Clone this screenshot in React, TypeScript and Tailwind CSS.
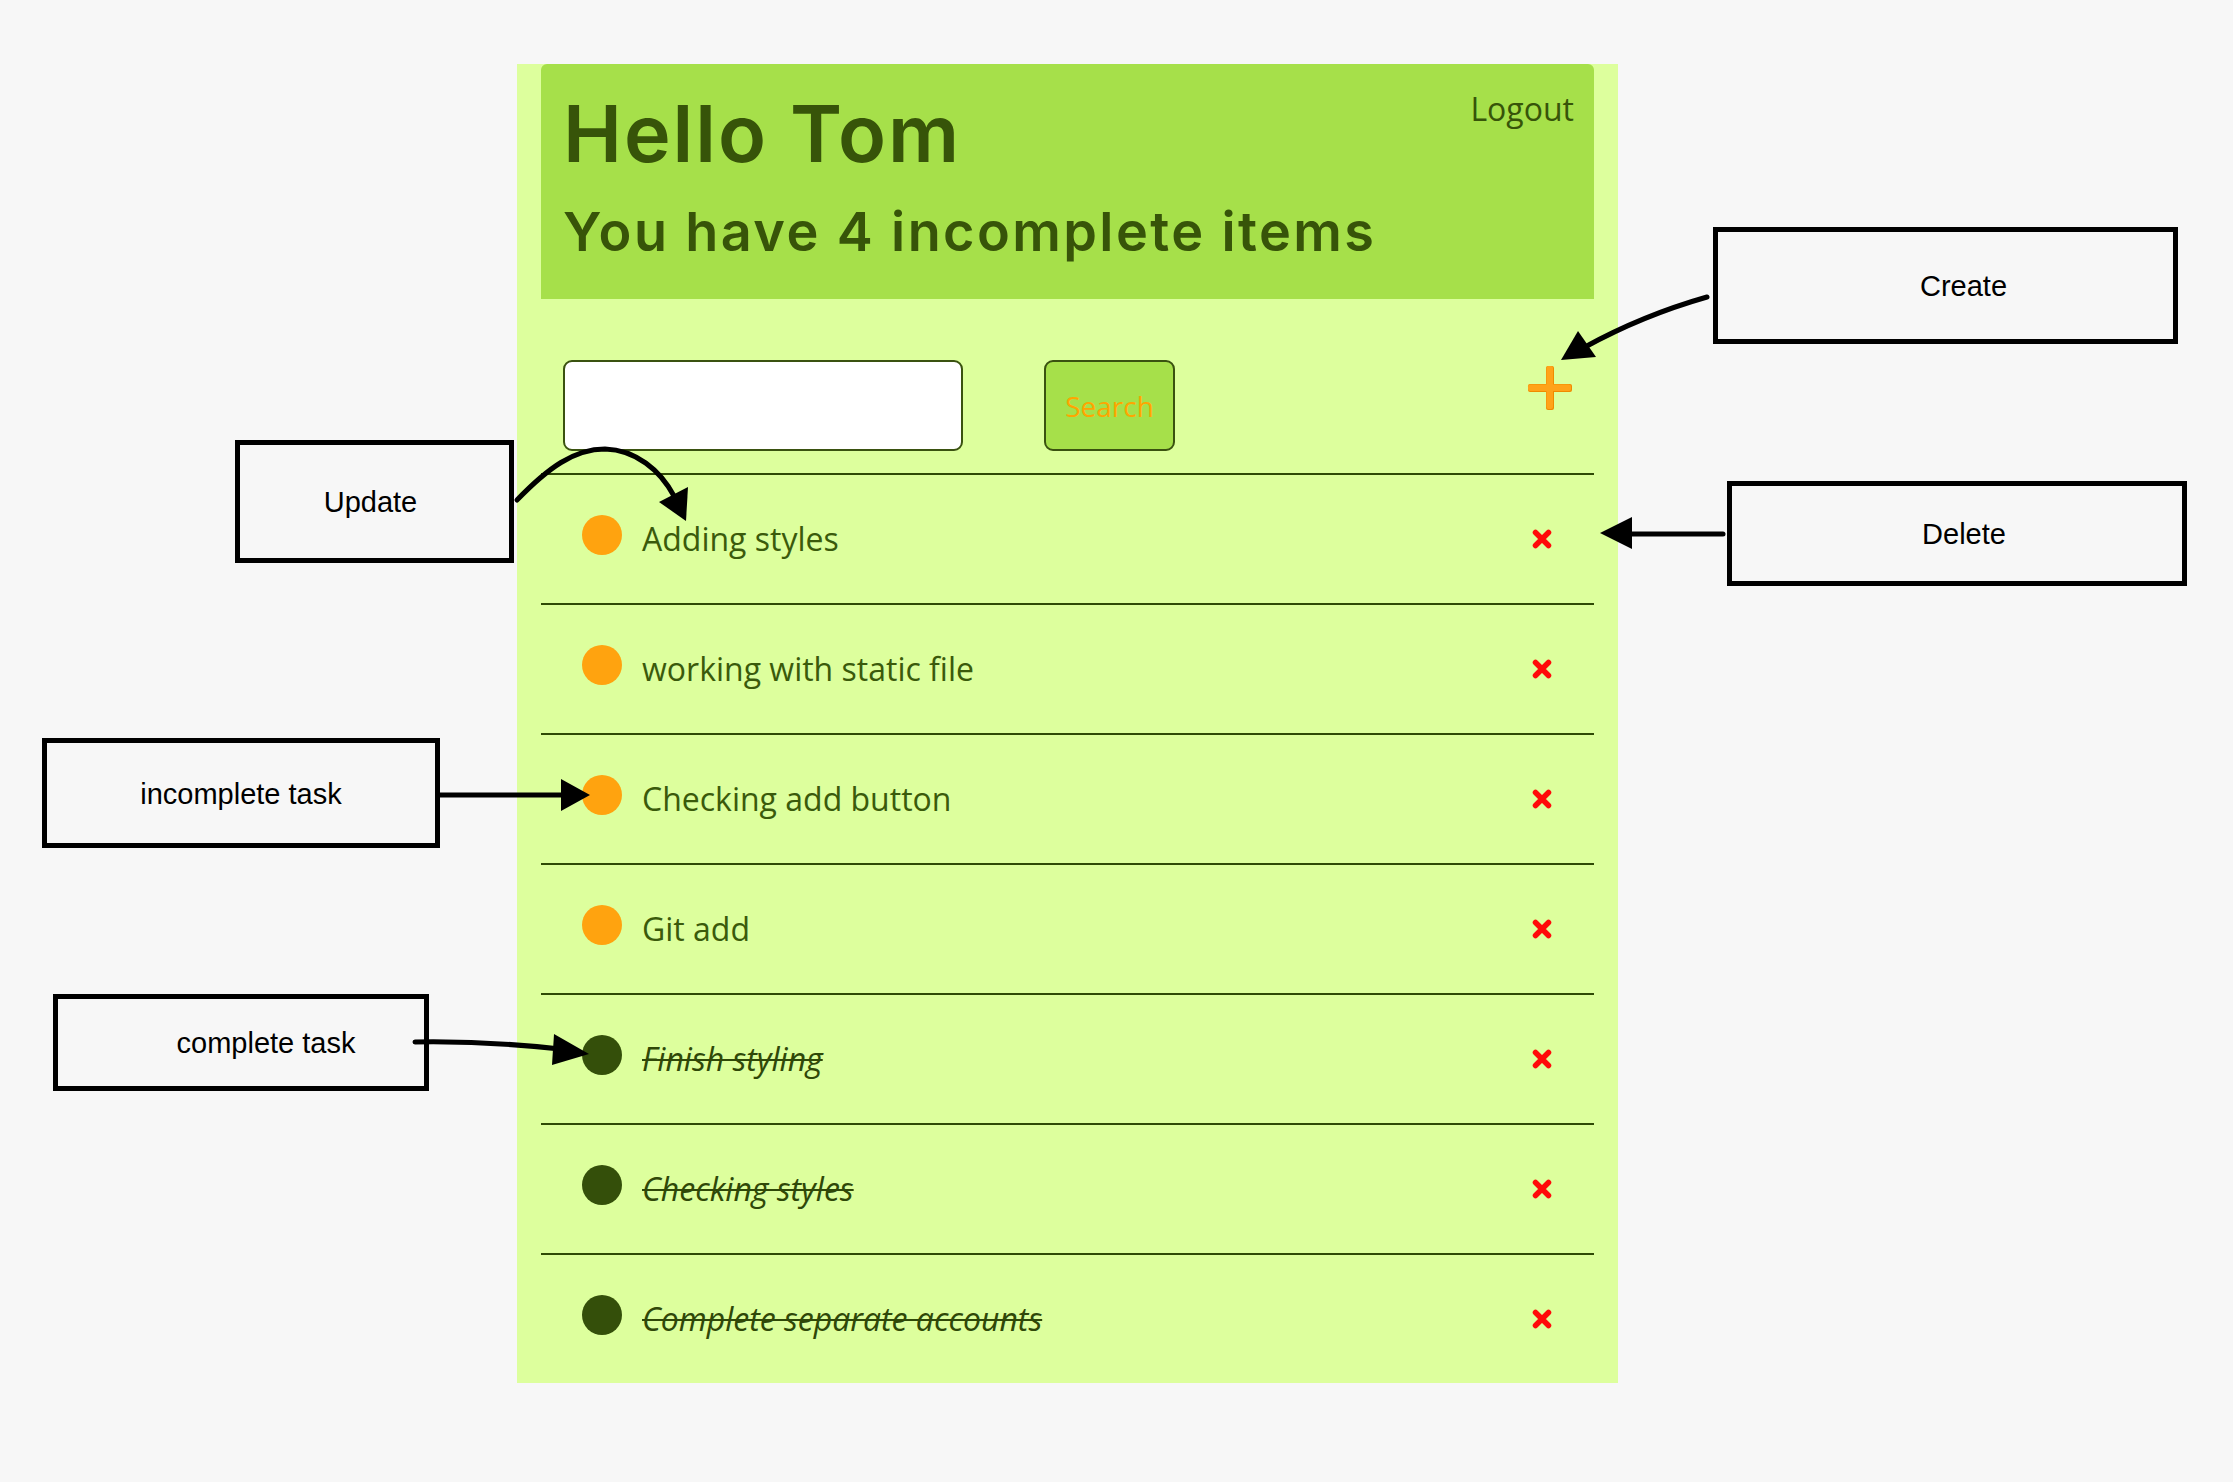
import React from "react";

type Task = { text: string; done: boolean };

const tasks: Task[] = [
  { text: "Adding styles", done: false },
  { text: "working with static file", done: false },
  { text: "Checking add button", done: false },
  { text: "Git add", done: false },
  { text: "Finish styling", done: true },
  { text: "Checking styles", done: true },
  { text: "Complete separate accounts", done: true },
];

function XMark() {
  return (
    <svg width="22" height="22" viewBox="0 0 22 22">
      <path d="M4.5 4.5 L17.5 17.5 M17.5 4.5 L4.5 17.5" stroke="#ff0a0a" strokeWidth="5.5" strokeLinecap="round" />
    </svg>
  );
}

function Plus() {
  return (
    <svg width="46" height="46" viewBox="0 0 46 46">
      <rect x="19" y="1" width="8" height="44" rx="2" fill="#f08a00" />
      <rect x="1" y="19" width="44" height="8" rx="2" fill="#f08a00" />
      <rect x="19.5" y="1" width="6.5" height="43" rx="2" fill="#ffa319" />
      <rect x="1" y="19.5" width="43" height="6.5" rx="2" fill="#ffa319" />
    </svg>
  );
}

function Note({ className, label, textClass }: { className: string; label: string; textClass?: string }) {
  return (
    <div
      className={`absolute border-[5px] border-black flex items-center justify-center text-[29px] text-black ${className}`}
      style={{ fontFamily: '"Liberation Sans", Arial, sans-serif' }}
    >
      <span className={`pt-[3px] ${textClass ?? ""}`}>{label}</span>
    </div>
  );
}

export default function App() {
  return (
    <div className="relative w-[2233px] h-[1482px] bg-[#f7f7f7] overflow-hidden pt-[64px] pl-[517px]">
      <div className="w-[1101px] bg-[#ddff9d] px-[24px] pb-0">
        <div
          className="h-[235px] bg-[#a6e04a] rounded-t-[6px] pl-[22px] pr-[20px] pt-[30px] flex items-start justify-between text-[#375409]"
        >
          <div style={{ fontFamily: "Inter, sans-serif" }}>
            <div className="text-[79px] leading-none font-semibold tracking-[2px]">Hello Tom</div>
            <div className="text-[54px] leading-none font-semibold mt-[32px] tracking-[2.4px]">You have 4 incomplete items</div>
          </div>
          <div
            className="text-[32px] leading-none mt-[-1px]"
            style={{ fontFamily: '"Open Sans", sans-serif' }}
          >
            Logout
          </div>
        </div>

        <div className="h-[174px] flex items-start pt-[61px] pl-[22px] pr-[21px]">
          <input
            className="w-[400px] h-[91px] bg-white border-2 border-[#3a5210] rounded-[9px] outline-none"
            type="text"
          />
          <button
            className="ml-[81px] w-[131px] h-[91px] bg-[#a6e04a] border-2 border-[#3a5210] rounded-[9px] text-[#ffa500] text-[28px]"
            style={{ fontFamily: '"Open Sans", sans-serif' }}
          >
            Search
          </button>
          <div className="ml-auto mt-[5px]">
            <Plus />
          </div>
        </div>

        {tasks.map((t, i) => (
          <div
            key={i}
            className="h-[130px] border-t-2 border-[#2f4a05] flex items-center pl-[41px] pr-[41px] pb-[8px]"
          >
            <div
              className={`w-[40px] h-[40px] rounded-full shrink-0 ${t.done ? "bg-[#344f0a]" : "bg-[#ffa30f]"}`}
            />
            <div
              className={`ml-[20px] text-[32px] leading-none pt-[8px] ${
                t.done ? "italic line-through decoration-2 text-[#2f4808]" : "text-[#3a5a0b]"
              }`}
              style={{ fontFamily: '"Open Sans", sans-serif' }}
            >
              {t.text}
            </div>
            <div className="ml-auto pt-[8px]">
              <XMark />
            </div>
          </div>
        ))}
      </div>

      <Note className="left-[1713px] top-[227px] w-[465px] h-[117px]" label="Create" textClass="pl-[36px]" />
      <Note className="left-[1727px] top-[481px] w-[460px] h-[105px]" label="Delete" textClass="pl-[14px]" />
      <Note className="left-[235px] top-[440px] w-[279px] h-[123px]" label="Update" textClass="pr-[8px]" />
      <Note className="left-[42px] top-[738px] w-[398px] h-[110px]" label="incomplete task" />
      <Note className="left-[53px] top-[994px] w-[376px] h-[97px]" label="complete task" textClass="pl-[50px]" />

      <svg className="absolute left-0 top-0 pointer-events-none" width="2233" height="1482" viewBox="0 0 2233 1482">
        <g stroke="#000" strokeWidth="5" fill="none" strokeLinecap="round">
          <path d="M517 500 C 548 468 574 449 605 449 C 636 450 660 470 674 496" />
          <path d="M1707 297 C 1665 309 1625 325 1585 347" />
          <path d="M1723 534 L1625 534" />
          <path d="M440 795 L568 795" />
          <path d="M415 1042 C 475 1041 515 1044 560 1049" />
        </g>
        <g fill="#000">
          <polygon points="659,502 688,487 686,521" />
          <polygon points="1561,360 1578,331 1596,357" />
          <polygon points="1600,533 1632,517 1632,549" />
          <polygon points="590,795 561,779 561,811" />
          <polygon points="589,1054 554,1034 552,1065" />
        </g>
      </svg>
    </div>
  );
}
